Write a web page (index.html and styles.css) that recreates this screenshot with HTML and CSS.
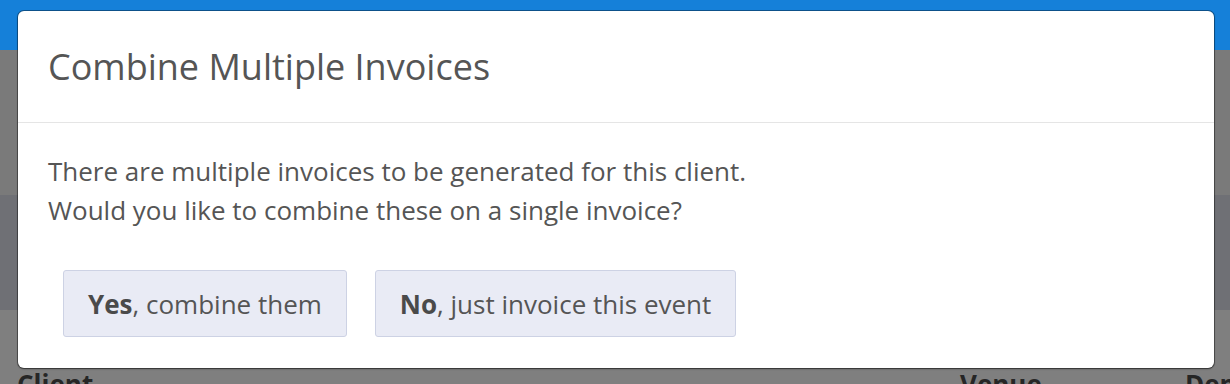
FILE: index.html
```html
<!DOCTYPE html>
<html lang="en">
  <head>
    <meta charset="utf-8">
    <title>Combine Multiple Invoices</title>
    <link rel="stylesheet" href="styles.css">
  </head>
  <body>
    <div class="page">
      <div class="navbar"></div>
      <div class="band band-top"></div>
      <div class="band band-mid"></div>
      <div class="band band-table">
        <div class="table-head">
          <span class="col-client">Client</span>
          <span class="col-venue">Venue</span>
          <span class="col-dep">Dep</span>
        </div>
      </div>
    </div>

    <div class="modal">
      <div class="modal-header">
        <h3>Combine Multiple Invoices</h3>
      </div>
      <div class="modal-body">
        <p>
          There are multiple invoices to be generated for this client.<br>
          Would you like to combine these on a single invoice?
        </p>
        <div class="modal-buttons">
          <button type="button"><b>Yes</b>, combine them</button>
          <button type="button"><b>No</b>, just invoice this event</button>
        </div>
      </div>
    </div>
  </body>
</html>
```

FILE: styles.css
```css
body {
  margin: 0;
  font-family: "Open Sans", Arial, sans-serif;
  overflow: hidden;
}

.page {
  height: 384px;
  display: flex;
  flex-direction: column;
}

.navbar {
  height: 50px;
  background-color: #1580d9;
}

.band-top {
  height: 145px;
  background-color: #7a7a7a;
}

.band-mid {
  height: 115px;
  background-color: #6f7075;
}

.band-table {
  flex: 1;
  background-color: #7f7f7f;
  position: relative;
}

.table-head {
  position: absolute;
  top: 56px;
  left: 0;
  right: 0;
  font-weight: bold;
  font-size: 26px;
  color: #262626;
}

.table-head span {
  position: absolute;
}

.col-client {
  left: 17px;
}

.col-venue {
  left: 960px;
}

.col-dep {
  left: 1185px;
}

.modal {
  position: absolute;
  top: 11px;
  left: 18px;
  width: 1196px;
  height: 357px;
  background-color: #fff;
  border-radius: 6px;
  box-shadow: 0 0 0 1px rgba(0, 0, 0, 0.35), 0 1px 2px rgba(0, 0, 0, 0.4);
  color: #555;
}

.modal-header {
  height: 111px;
  border-bottom: 1px solid #e5e5e5;
  display: flex;
  align-items: center;
  padding: 0 30px;
}

.modal-header h3 {
  margin: 0;
  font-weight: normal;
  font-size: 36px;
  color: #555;
}

.modal-body {
  padding: 29px 30px 0 30px;
}

.modal-body p {
  margin: 0;
  font-size: 26px;
  line-height: 39px;
}

.modal-buttons {
  display: flex;
  gap: 28px;
  margin-top: 40px;
  padding-left: 15px;
}

.modal-buttons button {
  height: 67px;
  padding: 0 24px;
  font-family: "Open Sans", Arial, sans-serif;
  font-size: 26px;
  color: #555;
  background-color: #e9ebf5;
  border: 1px solid #cdd2e4;
  border-radius: 3px;
}

.modal-buttons button b {
  color: #4a4a4a;
}
```
